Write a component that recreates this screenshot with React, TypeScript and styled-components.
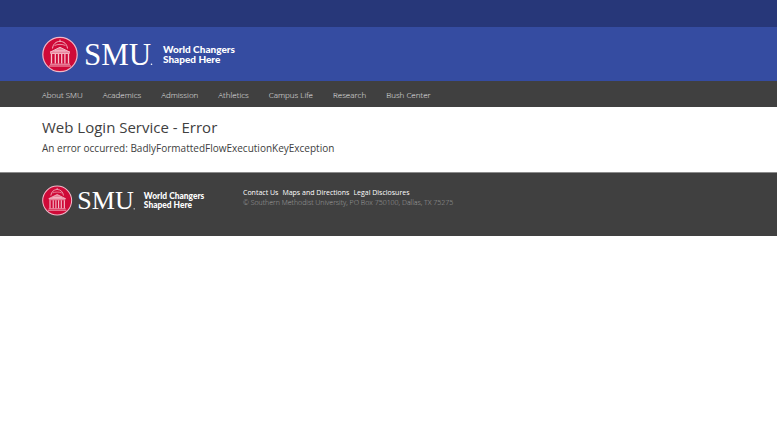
import React from 'react';
import styled, { createGlobalStyle } from 'styled-components';

const GlobalStyle = createGlobalStyle`
  * { box-sizing: border-box; }
  body {
    margin: 0;
    background: #fff;
    color: #404040;
    font-family: 'Open Sans', 'Noto Sans', sans-serif;
  }
`;

const TopBar = styled.div`
  height: 27px;
  background: #273779;
`;

const Banner = styled.header`
  padding: 9px 42px 8px;
  background: #354ca1;
`;

const HomeLink = styled.a<{ $width: number }>`
  display: block;
  flex: none;
  width: ${({ $width }) => $width}px;

  svg {
    display: block;
    width: 100%;
    height: auto;
  }
`;

const Nav = styled.nav`
  display: flex;
  flex-wrap: wrap;
  gap: 0 20px;
  padding: 1px 42px 0;
  background: #404040;
`;

const NavLink = styled.a`
  color: #ececec;
  font-size: 8px;
  font-weight: 300;
  line-height: 25px;
  text-decoration: none;
`;

const Main = styled.main`
  padding: 8px 42px 15px;
`;

const Title = styled.h1`
  margin: 0;
  font-size: 15px;
  font-weight: 400;
  line-height: 24px;
`;

const Message = styled.p`
  margin: 0;
  font-size: 10px;
  line-height: 18px;
`;

const Footer = styled.footer`
  display: flex;
  gap: 36px;
  padding: 12px 42px 20px;
  background: #404040;
  border-top: 1px solid #8c8c8c;
`;

const FooterInfo = styled.div`
  padding-top: 3px;
  font-size: 7px;
  line-height: 10px;
`;

const FooterLinks = styled.div`
  display: flex;
  flex-wrap: wrap;
  gap: 0 4px;
`;

const FooterLink = styled.a`
  color: #fff;
  text-decoration: none;
`;

const Copyright = styled.p`
  margin: 0;
  color: #a0a0a0;
  font-weight: 300;
`;

const navItems = ['About SMU', 'Academics', 'Admission', 'Athletics', 'Campus Life', 'Research', 'Bush Center'];
const footerItems = ['Contact Us', 'Maps and Directions', 'Legal Disclosures'];
const columns = [9.5, 13.3, 16.5, 19.7, 22.9, 26.5];

function Logo() {
  return (
    <svg viewBox="0 0 196 37" role="img" aria-label="SMU World Changers Shaped Here">
      <circle cx="18" cy="18.5" r="17.2" fill="#cf0a38" stroke="#f0b8c8" strokeWidth="1.2" />
      <g fill="none" stroke="#f6c3cf" strokeWidth="0.9">
        <path d="M10.500 12.500C11 8 14 5.500 18 5.300c4 .2 7 2.700 7.500 7.200M18 3.500v2" />
        <path d="M12.500 9.500c3-1.500 8-1.500 11 0" strokeWidth="0.700" />
        <path d="M8 16.200 18 11.300l10 4.900zM12.500 14.800h11" fill="#e8839a" />
        <path d="M8.300 17.500h19.400" />
        {columns.map((x) => (
          <path key={x} d={`M${x} 18v9.500`} strokeWidth="1.300" />
        ))}
        <path d="M8 28.200h20M7 30h22" />
      </g>
      <g fill="#fff">
        <text x="42" y="29" fontFamily="'Liberation Serif', serif" fontSize="31">SMU</text>
        <circle cx="109.500" cy="28.300" r="0.800" />
        <g fontFamily="Lato, sans-serif" fontSize="10" fontWeight="900">
          <text x="121" y="17">World Changers</text>
          <text x="121" y="27">Shaped Here</text>
        </g>
      </g>
    </svg>
  );
}

export default function App() {
  return (
    <>
      <GlobalStyle />
      <TopBar />
      <Banner>
        <HomeLink href="#" $width={196}><Logo /></HomeLink>
      </Banner>
      <Nav>
        {navItems.map((item) => <NavLink key={item} href="#">{item}</NavLink>)}
      </Nav>
      <Main>
        <Title>Web Login Service - Error</Title>
        <Message>An error occurred: BadlyFormattedFlowExecutionKeyException</Message>
      </Main>
      <Footer>
        <HomeLink href="#" $width={165}><Logo /></HomeLink>
        <FooterInfo>
          <FooterLinks>
            {footerItems.map((item) => <FooterLink key={item} href="#">{item}</FooterLink>)}
          </FooterLinks>
          <Copyright>© Southern Methodist University, PO Box 750100, Dallas, TX 75275</Copyright>
        </FooterInfo>
      </Footer>
    </>
  );
}
